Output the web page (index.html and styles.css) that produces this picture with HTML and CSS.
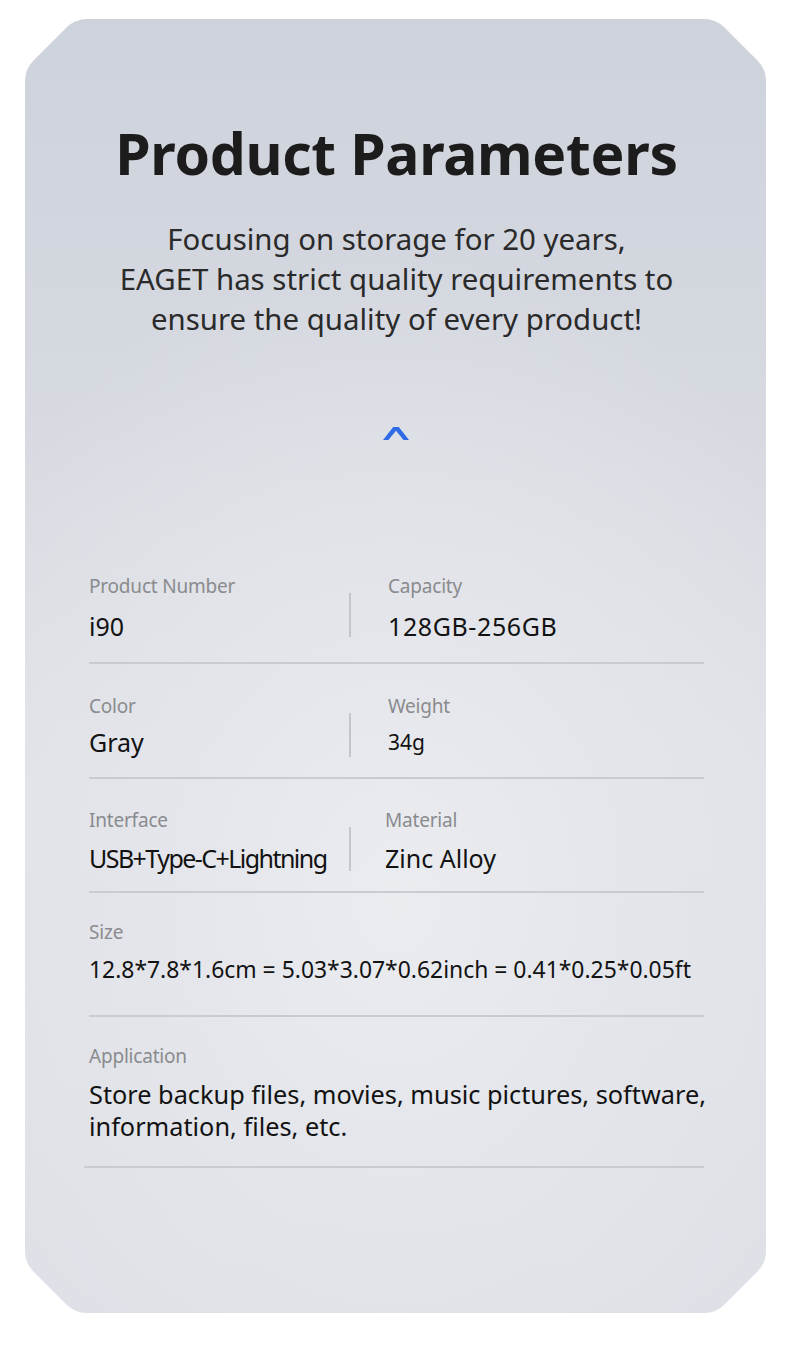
FILE: index.html
```html
<!DOCTYPE html>
<html>
<head>
<meta charset="utf-8">
<link rel="stylesheet" href="styles.css">
</head>
<body>
<div class="page">
  <div class="card">
    <h1 class="title">Product Parameters</h1>
    <p class="subtitle">Focusing on storage for 20 years,<br>EAGET has strict quality requirements to<br>ensure the quality of every product!</p>
    <div class="chevron">
      <svg width="26" height="13" viewBox="0 0 26 13"><path d="M0 13 L10.2 0 L15.8 0 L26 13 L20.6 13 L13 3.8 L5.4 13 Z" fill="#2f6be6"/></svg>
    </div>
    <div class="table">
      <div class="row pair r1">
        <div class="cell">
          <div class="label">Product Number</div>
          <div class="value">i90</div>
        </div>
        <div class="divider"></div>
        <div class="cell right">
          <div class="label">Capacity</div>
          <div class="value digits">128GB-256GB</div>
        </div>
      </div>
      <div class="row pair r2">
        <div class="cell">
          <div class="label">Color</div>
          <div class="value">Gray</div>
        </div>
        <div class="divider"></div>
        <div class="cell right">
          <div class="label">Weight</div>
          <div class="value small">34g</div>
        </div>
      </div>
      <div class="row pair r3">
        <div class="cell">
          <div class="label">Interface</div>
          <div class="value narrow">USB+Type-C+Lightning</div>
        </div>
        <div class="divider"></div>
        <div class="cell right shift">
          <div class="label">Material</div>
          <div class="value">Zinc Alloy</div>
        </div>
      </div>
      <div class="row r4">
        <div class="label">Size</div>
        <div class="value size">12.8*7.8*1.6cm = 5.03*3.07*0.62inch = 0.41*0.25*0.05ft</div>
      </div>
      <div class="row r5">
        <div class="label">Application</div>
        <div class="value app">Store backup files, movies, music pictures, software, information, files, etc.</div>
      </div>
    </div>
  </div>
</div>
</body>
</html>
```

FILE: styles.css
```css
html, body {
  margin: 0;
  padding: 0;
  background: #ffffff;
}
.page {
  padding: 19px 24px 45px 25px;
}
.card {
  width: 741px;
  height: 1294px;
  box-sizing: border-box;
  padding: 96px 62px 0 64px;
  clip-path: path("M 62 0 L 679 0 Q 691 0 699.5 8.5 L 732.5 41.5 Q 741 50 741 62 L 741 1232 Q 741 1244 732.5 1252.5 L 699.5 1285.5 Q 691 1294 679 1294 L 62 1294 Q 50 1294 41.5 1285.5 L 8.5 1252.5 Q 0 1244 0 1232 L 0 62 Q 0 50 8.5 41.5 L 41.5 8.5 Q 50 0 62 0 Z");
  background:
    radial-gradient(ellipse 70% 50% at 50% 68%, rgba(234,236,240,1) 0%, rgba(228,230,235,0.9) 45%, rgba(228,230,235,0) 100%),
    linear-gradient(180deg, #ced2db 0%, #d6d9e0 30%, #e0e2e7 60%, #dcdfe5 100%);
  font-family: "Noto Sans", "DejaVu Sans", sans-serif;
  color: #141414;
}
.title {
  margin: 0;
  text-align: center;
  font-size: 57px;
  line-height: 76px;
  font-weight: 700;
  color: #1c1c1c;
  letter-spacing: -0.3px;
}
.subtitle {
  margin: 28px 0 0;
  text-align: center;
  font-size: 29.4px;
  line-height: 40px;
  color: #2a2a2a;
}
.chevron {
  display: flex;
  justify-content: center;
  margin-top: 88px;
  height: 13px;
  padding-right: 2px;
}
.table {
  margin-top: 134px;
  display: flex;
  flex-direction: column;
}
.row {
  border-bottom: 2px solid #c8cbd1;
}
.pair {
  display: grid;
  grid-template-columns: 260px 2px 1fr;
}
.cell {
  display: flex;
  flex-direction: column;
}
.cell.right {
  padding-left: 37px;
}
.cell.right.shift {
  padding-left: 34px;
}
.divider {
  background: #c3c6cc;
  width: 2px;
  height: 44px;
  margin-top: 19px;
}
.label {
  font-size: 19px;
  line-height: 24px;
  color: #8a8b8e;
  letter-spacing: -0.2px;
}
.value {
  font-size: 25px;
  line-height: 30px;
  color: #121212;
  margin-top: 11px;
}
.value.digits {
  letter-spacing: 0.6px;
}
.value.small {
  font-size: 21px;
}
.value.narrow {
  letter-spacing: -1.55px;
}
.value.size {
  font-size: 22.9px;
}
.value.app {
  font-size: 25.3px;
  line-height: 32px;
  margin-top: 10px;
  margin-right: -12px;
}
.r1 { padding: 0 0 21px; }
.r1 .value { margin-top: 13px; }
.r2 { padding: 30px 0 20px; }
.r2 .value { margin-top: 9px; }
.r3 { padding: 29px 0 18px; }
.r4 { padding: 27px 0 30px; }
.r5 { padding: 27px 0 24px; margin-left: -5px; padding-left: 5px; }
```
